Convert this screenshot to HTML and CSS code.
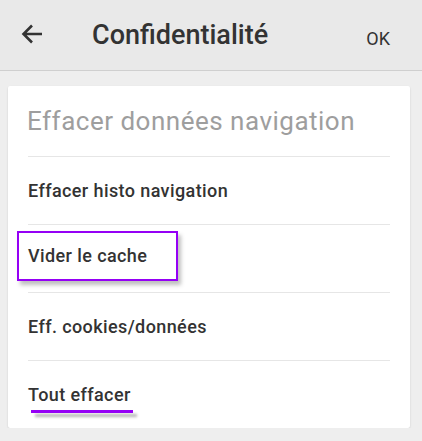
FILE: index.html
```html
<!DOCTYPE html>
<html lang="fr">
<head>
  <meta charset="UTF-8" />
  <meta name="viewport" content="width=device-width, initial-scale=1.0"/>
  <title>Confidentialité</title>
  <link rel="stylesheet" href="styles.css">
</head>
<body>
  <header class="toolbar">
    <svg class="back" width="22" height="22" viewBox="0 0 22 22">
      <path d="M21 11H3M11 2.5L2.5 11l8.5 8.5" fill="none" stroke="#333" stroke-width="2.6"/>
    </svg>
    <h1>Confidentialité</h1>
    <span class="ok">OK</span>
  </header>

  <div class="card">
    <h2>Effacer données navigation</h2>
    <div class="row">Effacer histo navigation</div>
    <div class="row"><span class="boxed">Vider le cache</span></div>
    <div class="row">Eff. cookies/données</div>
    <div class="row"><span class="underlined">Tout effacer</span></div>
  </div>
</body>
</html>
```

FILE: styles.css
```css
body {
  margin: 0;
  font-family: Roboto, "Noto Sans", sans-serif;
  background-color: #eeeeee;
  color: #333333;
}

.toolbar {
  height: 70px;
  background-color: #e9e9e9;
  border-bottom: 1px solid #cfcfcf;
  display: flex;
  align-items: center;
  padding: 0 32px 0 21px;
}

.back {
  flex: none;
  margin-top: -2px;
}

.toolbar h1 {
  margin: -1px 0 0 49px;
  font-size: 27px;
  font-weight: 500;
  color: #333;
  flex: 1;
}

.ok {
  font-size: 18px;
  font-weight: 400;
  margin-top: 7px;
}

.card {
  margin: 15px 12px 0 8px;
  background-color: #fff;
  border-radius: 2px;
  box-shadow: 0 1px 2px rgba(0, 0, 0, 0.15);
  padding: 0 20px;
  display: flex;
  flex-direction: column;
}

.card h2 {
  margin: 0 0 0 -1px;
  height: 70px;
  display: flex;
  align-items: center;
  font-size: 26px;
  font-weight: 400;
  letter-spacing: 0.5px;
  color: #9e9e9e;
}

.row {
  height: 67px;
  border-top: 1px solid #e6e6e6;
  display: flex;
  align-items: center;
  font-size: 18px;
  font-weight: 500;
  letter-spacing: 0.4px;
}

.boxed {
  display: flex;
  align-items: center;
  width: 148px;
  height: 46px;
  margin: -6px 0 0 -11px;
  padding-left: 9px;
  border: 2px solid #9500f5;
  box-shadow: 3px 4px 4px rgba(0, 0, 0, 0.25);
}

.underlined {
  position: relative;
}

.underlined::after {
  content: "";
  position: absolute;
  left: 3px;
  right: -2px;
  bottom: -8px;
  height: 3px;
  background-color: #9500f5;
  box-shadow: 4px 4px 3px rgba(0, 0, 0, 0.3);
}
```
